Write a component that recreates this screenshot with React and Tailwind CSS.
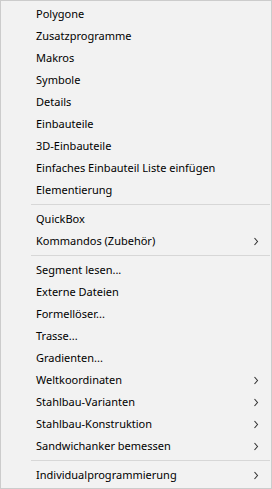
import React from 'react';

const groups = [
    [
        { label: 'Polygone' },
        { label: 'Zusatzprogramme' },
        { label: 'Makros' },
        { label: 'Symbole' },
        { label: 'Details' },
        { label: 'Einbauteile' },
        { label: '3D-Einbauteile' },
        { label: 'Einfaches Einbauteil Liste einfügen' },
        { label: 'Elementierung' },
    ],
    [
        { label: 'QuickBox' },
        { label: 'Kommandos (Zubehör)', sub: true },
    ],
    [
        { label: 'Segment lesen...' },
        { label: 'Externe Dateien' },
        { label: 'Formellöser...' },
        { label: 'Trasse...' },
        { label: 'Gradienten...' },
        { label: 'Weltkoordinaten', sub: true },
        { label: 'Stahlbau-Varianten', sub: true },
        { label: 'Stahlbau-Konstruktion', sub: true },
        { label: 'Sandwichanker bemessen', sub: true },
    ],
    [
        { label: 'Individualprogrammierung', sub: true },
    ],
];

const Chevron = () => (
    <svg width="6" height="9" viewBox="0 0 6 9" className="shrink-0 mt-[2px]">
        <path d="M1.5 1 L4.5 4.5 L1.5 8" fill="none" stroke="#333" strokeWidth="1.1" />
    </svg>
);

export default function App() {
    return (
        <div className="w-[272px] h-[489px] bg-[#f2f2f2] border border-[#cccccc] py-[2px] text-[11px] text-black" style={{ fontFamily: '"Noto Sans", "Segoe UI", sans-serif' }}>
            {groups.map((items, gi) => (
                <div key={gi}>
                    {gi > 0 && (
                        <div className="h-[7px] flex items-center pl-[30px] pr-[1px]">
                            <div className="h-px w-full bg-[#d7d7d7]"></div>
                        </div>
                    )}
                    {items.map((it) => (
                        <div key={it.label} className="h-[22px] flex items-center justify-between pl-[35px] pr-[12px] pb-[2px]">
                            <span className="leading-none whitespace-nowrap">{it.label}</span>
                            {it.sub && <Chevron />}
                        </div>
                    ))}
                </div>
            ))}
        </div>
    );
}
